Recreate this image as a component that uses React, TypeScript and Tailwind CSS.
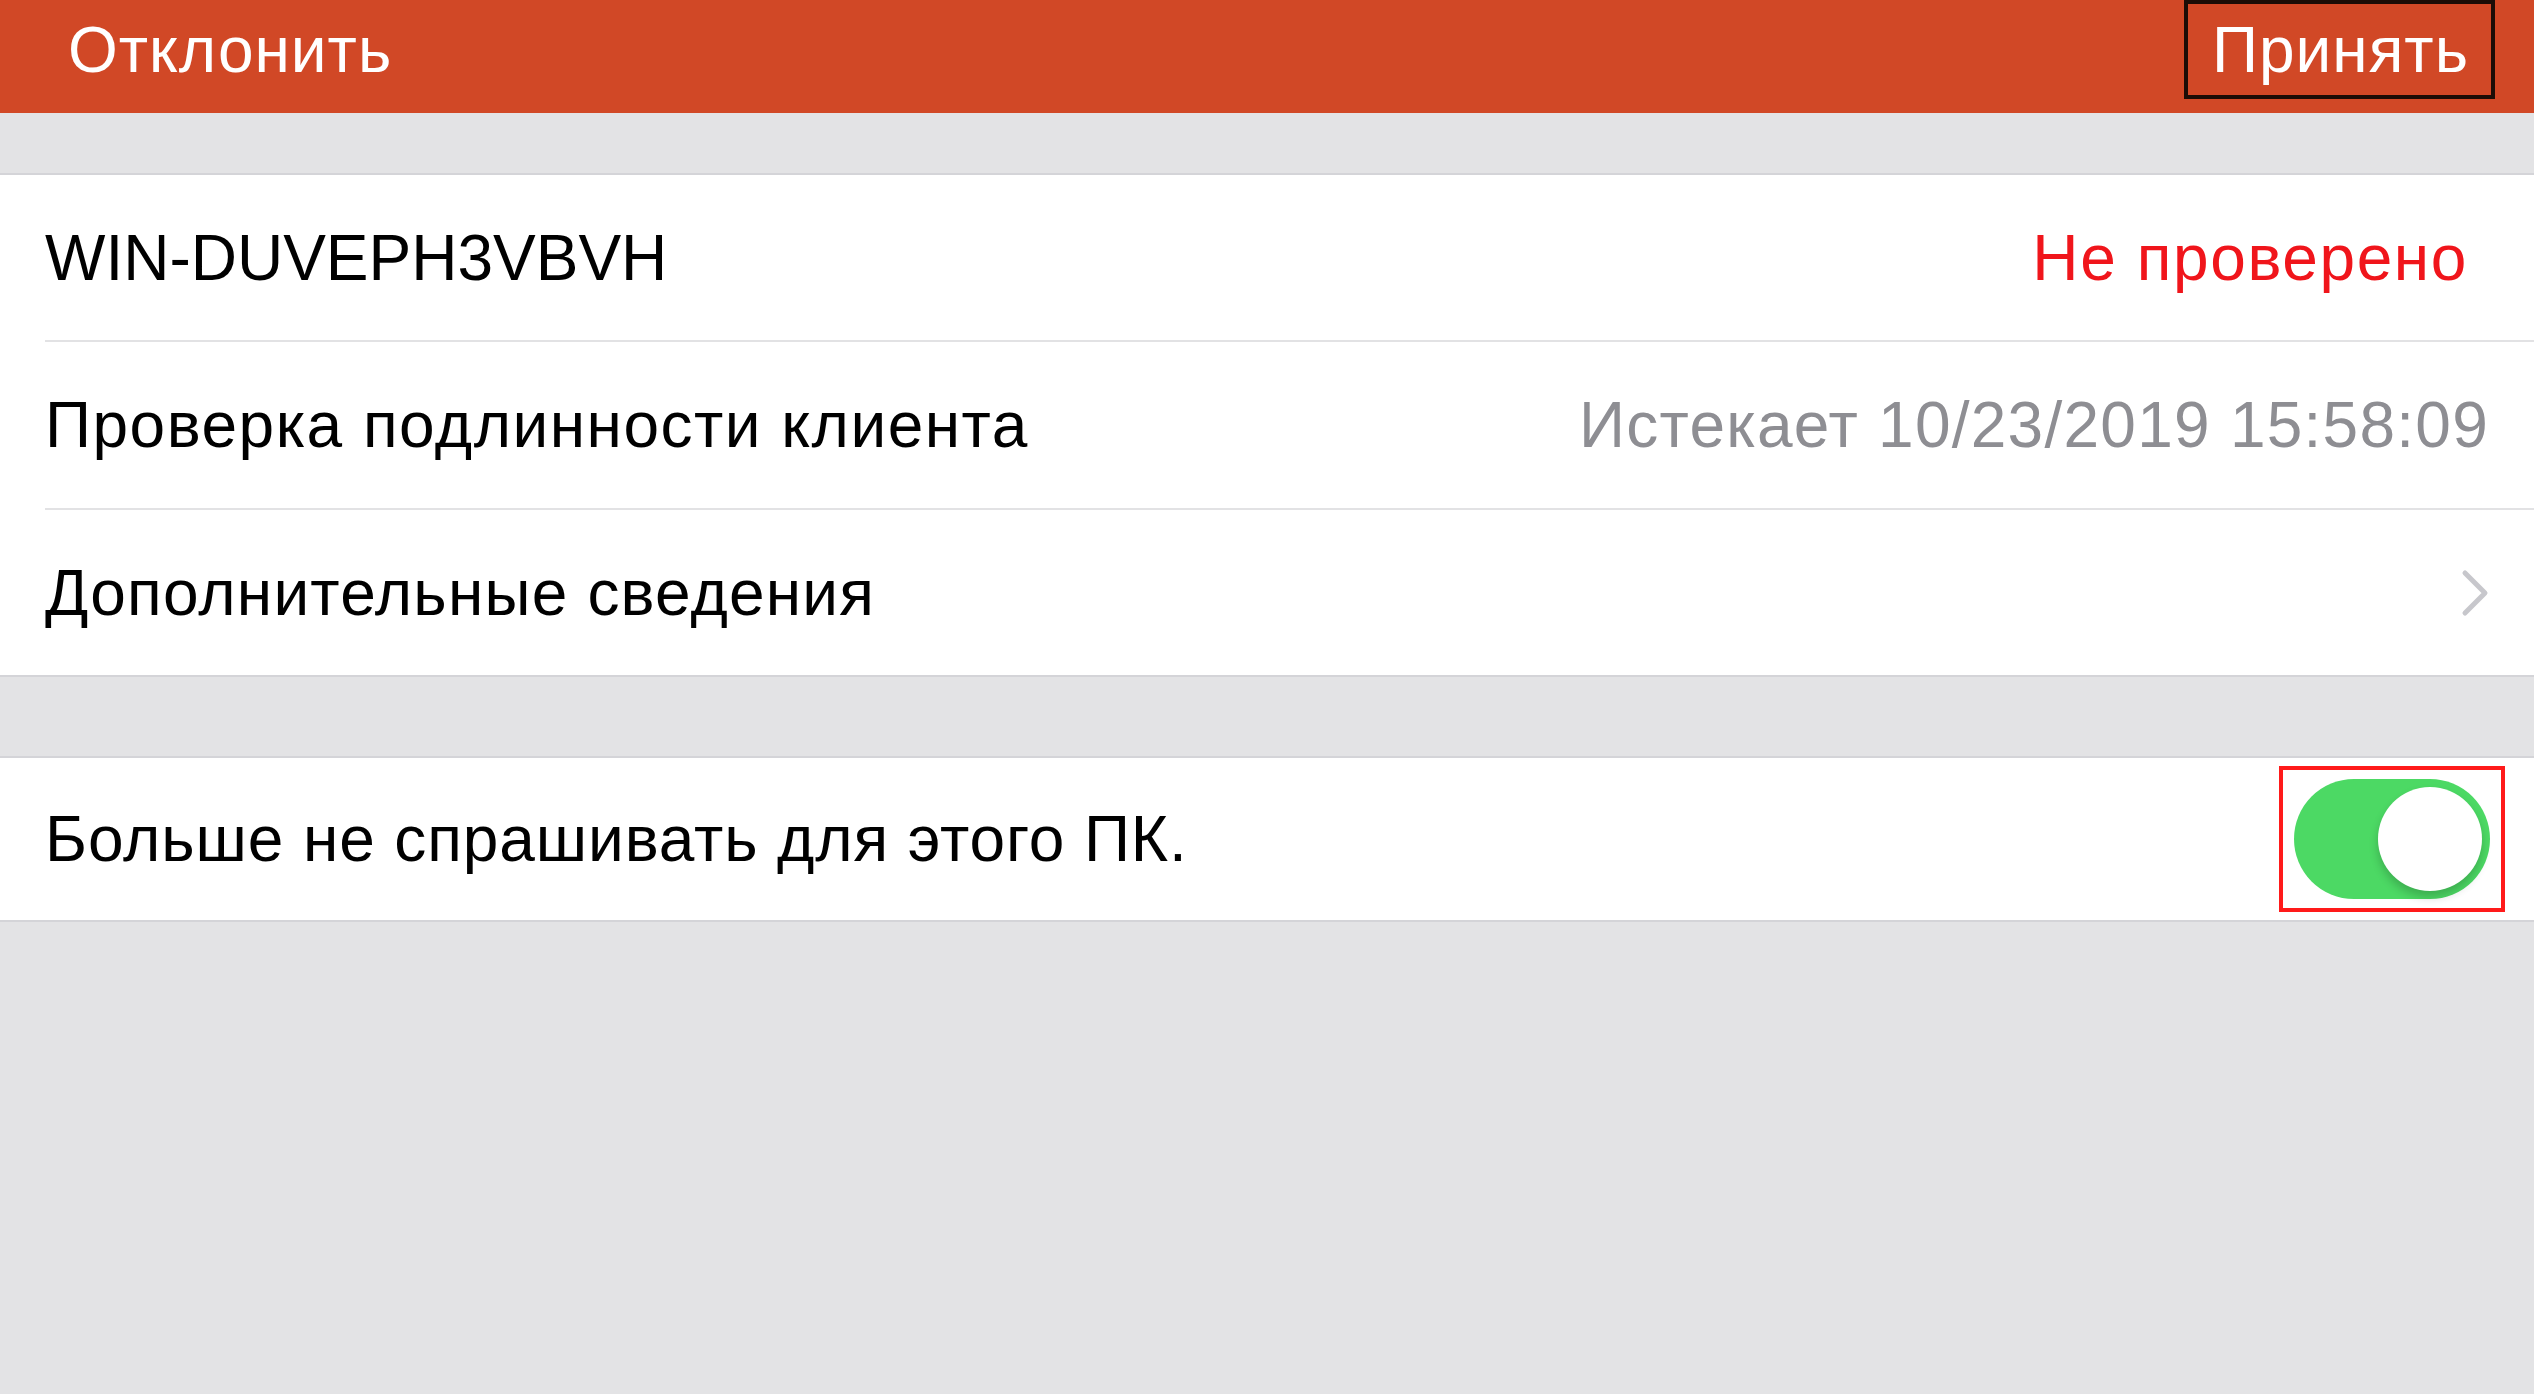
import React, { useState } from "react";

const font = { fontFamily: '"Liberation Sans", Arial, sans-serif' };

function Toggle({ on, onChange }: { on: boolean; onChange: () => void }) {
  return (
    <button
      type="button"
      onClick={onChange}
      className={`relative h-[120px] w-[196px] rounded-full transition-colors ${
        on ? "bg-[#4cd964]" : "bg-[#e5e5ea]"
      }`}
    >
      <span
        className={`absolute top-[8px] h-[104px] w-[104px] rounded-full bg-white shadow-[0_6px_10px_rgba(0,0,0,0.2)] transition-all ${
          on ? "left-[84px]" : "left-[8px]"
        }`}
      />
    </button>
  );
}

function Chevron() {
  return (
    <svg width="28" height="48" viewBox="0 0 28 48" fill="none">
      <path d="M4 4 L24 24 L4 44" stroke="#c7c7cc" strokeWidth="5" strokeLinecap="round" strokeLinejoin="round" />
    </svg>
  );
}

export default function App() {
  const [remember, setRemember] = useState(true);

  return (
    <div className="min-h-screen w-full bg-[#e3e3e5] text-black" style={font}>
      {/* Navigation bar */}
      <header className="flex h-[113px] items-start justify-between bg-[#d14826] pl-[68px] pr-[39px]">
        <button className="mt-[18px] text-[64px] leading-none tracking-[1px] text-white">Отклонить</button>
        <button className="flex h-[99px] items-center border-[4px] border-[#1c0c06] pl-[24px] pr-[22px] text-[64px] leading-none tracking-[1px] text-white">
          Принять
        </button>
      </header>

      <div className="h-[60px]" />

      {/* Certificate details */}
      <section className="border-y-2 border-[#d4d4d8] bg-white">
        <div className="flex h-[165px] items-center justify-between pl-[45px] pr-[66px]">
          <span className="text-[64px] leading-none">WIN-DUVEPH3VBVH</span>
          <span className="text-[64px] leading-none tracking-[1.6px] text-[#f0151b]">Не проверено</span>
        </div>
        <div className="ml-[45px] h-[2px] bg-[#e2e2e4]" />
        <div className="flex h-[166px] items-center justify-between pl-[45px] pr-[45px]">
          <span className="text-[64px] leading-none tracking-[1.5px]">Проверка подлинности клиента</span>
          <span className="text-[64px] leading-none tracking-[1.25px] text-[#8e8e93]">Истекает 10/23/2019 15:58:09</span>
        </div>
        <div className="ml-[45px] h-[2px] bg-[#e2e2e4]" />
        <div className="flex h-[165px] items-center justify-between pl-[45px] pr-[45px]">
          <span className="text-[64px] leading-none tracking-[1.2px]">Дополнительные сведения</span>
          <Chevron />
        </div>
      </section>

      <div className="h-[79px]" />

      {/* Remember choice */}
      <section className="border-y-2 border-[#d4d4d8] bg-white">
        <div className="flex h-[162px] items-center justify-between pl-[45px] pr-[29px]">
          <span className="text-[64px] leading-none tracking-[0.9px]">Больше не спрашивать для этого ПК.</span>
          <div className="flex h-[146px] w-[226px] items-center justify-center border-[4px] border-[#ff1a1a]">
            <Toggle on={remember} onChange={() => setRemember((v) => !v)} />
          </div>
        </div>
      </section>
    </div>
  );
}
